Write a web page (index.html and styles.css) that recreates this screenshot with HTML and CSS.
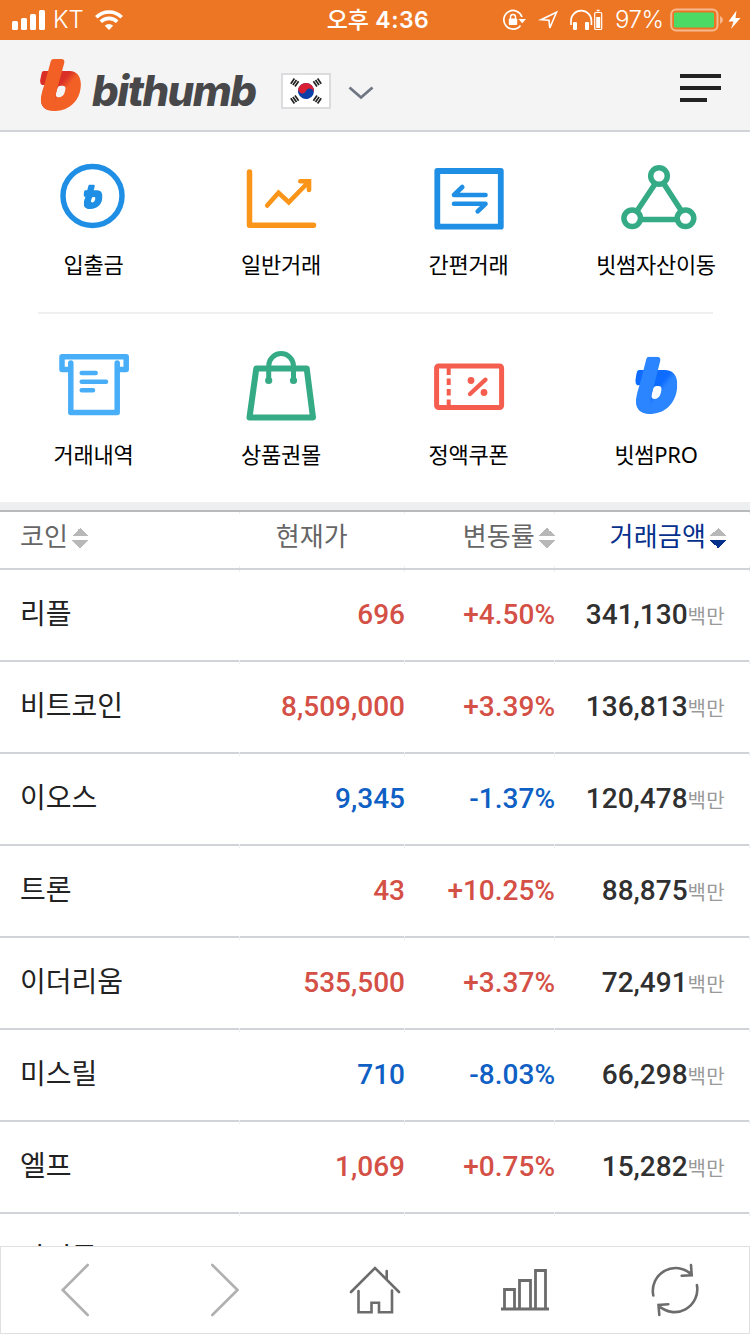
FILE: index.html
```html
<!DOCTYPE html>
<html lang="ko">
<head>
    <meta charset="UTF-8">
    <meta name="viewport" content="width=device-width, initial-scale=1.0">
    <title>bithumb</title>
    <link rel="stylesheet" href="styles.css">
</head>
<body>
    <svg width="0" height="0">
        <defs>
            <linearGradient id="fold-red" x1="0.45" y1="0.2" x2="0.8" y2="0.5">
                <stop offset="0.2" stop-color="#d92f27"/>
                <stop offset="0.65" stop-color="#f26026"/>
            </linearGradient>
            <linearGradient id="fold-blue" x1="0.45" y1="0.2" x2="0.8" y2="0.5">
                <stop offset="0.4" stop-color="#0d6cff"/>
                <stop offset="0.7" stop-color="#2b85ff"/>
            </linearGradient>
            <path id="b-tab" d="M10 36H60L50 78H6Q-1 74 0 64L4 44Q5 37 10 36Z"/>
            <path id="b-bowl" fill-rule="evenodd" d="M50 36H88C111 37 122 52 122 76C122 122 90 156 44 156C14 156 0 142 3 116L20 70ZM62 80Q53 80 51 90L47 104Q46 115 56 115Q67 114 72 104Q76 94 76 88Q76 80 68 80Z"/>
            <path id="b-stem" d="M40 0H64Q75 1 72 13L47 104Q40 130 50 156L30 154Q-2 148 3 112Q5 98 13 76L32 6Q34 0 40 0Z"/>
        </defs>
    </svg>

    <div class="status-bar">
        <div class="status-left">
            <svg width="33" height="20" viewBox="12 10 33 20" fill="#fff">
                <rect x="12" y="21" width="6" height="9" rx="1.5"/>
                <rect x="21" y="18" width="6" height="12" rx="1.5"/>
                <rect x="30" y="14" width="6" height="16" rx="1.5"/>
                <rect x="39" y="10" width="6" height="20" rx="1.5"/>
            </svg>
            <span class="carrier">KT</span>
            <svg width="28" height="20" viewBox="0 0 28 20" fill="none" stroke="#fff" stroke-width="3.6">
                <path d="M1.3 7.2a18 18 0 0 1 25.4 0"/>
                <path d="M5.8 11.8a11.6 11.6 0 0 1 16.4 0"/>
                <path d="M14 20l-4.2-4.2a6 6 0 0 1 8.4 0z" fill="#fff" stroke="none"/>
            </svg>
        </div>
        <div class="clock"><span>오후</span> 4:36</div>
        <div class="status-right">
            <svg width="102" height="22" viewBox="502 9 102 22" fill="none" stroke="#fff" stroke-width="1.7">
                <path d="M522 17a9.3 9.3 0 1 0-1.500 8.500"/>
                <path d="M518.5 19h7.5l-3.8 4.2z" fill="#fff" stroke="none"/>
                <rect x="508.8" y="18.5" width="8.4" height="6.5" rx="1" fill="#fff" stroke="none"/>
                <path d="M510.5 19v-2a2.5 2.5 0 0 1 5 0v2" stroke-width="1.4"/>
                <path d="M556.5 12.2L541 19.7l8 0.6 0.8 7.7z" stroke-width="1.6"/>
                <path d="M571 25v-4.5a10.2 9.8 0 0 1 20.4 0V25"/>
                <rect x="573" y="22" width="4" height="8" rx="1" fill="#fff" stroke="none"/>
                <rect x="585" y="22" width="4" height="8" rx="1" fill="#fff" stroke="none"/>
                <rect x="594.7" y="12.5" width="7" height="17" rx="1" stroke-width="1.2"/>
                <path d="M596.6 10.5h3" stroke-width="1.5"/>
                <rect x="596.2" y="17" width="4" height="11" fill="#fff" stroke="none"/>
            </svg>
            <span class="percent">97%</span>
            <svg width="71" height="24" viewBox="670 8.5 71 24">
                <rect x="671.2" y="10" width="46.3" height="21" rx="5" fill="none" stroke="#f6b98f" stroke-width="2"/>
                <rect x="674" y="13" width="40" height="15" rx="1.5" fill="#4cd964"/>
                <path d="M720 16.5q3 1.5 3 4t-3 4z" fill="#f6b98f"/>
                <path d="M736.5 11l-8 11h5l-2.5 7.5 9.5-11h-5z" fill="#fff"/>
            </svg>
        </div>
    </div>

    <header class="header">
        <a class="logo" href="#">
            <svg width="41" height="52" viewBox="0 0 122 156">
                <use href="#b-tab" fill="#d92f27"/>
                <use href="#b-bowl" fill="url(#fold-red)"/>
                <use href="#b-stem" fill="#f26026"/>
            </svg>
            <span class="logo-text">bithumb</span>
        </a>
        <div class="language">
            <svg class="flag" width="46" height="32" viewBox="-23 -16 46 32">
                <g transform="rotate(25)">
                    <circle r="8" fill="#0b3fa8"/>
                    <path d="M-8 0a8 8 0 0 1 16 0a4 4 0 0 0-8 0a4 4 0 0 1-8 0z" fill="#d81f33"/>
                </g>
                <g stroke="#222" stroke-width="1.7">
                    <path d="M-11 -4.5l3.6-5.2M-13.1 -5.9l3.6-5.2M-15.2 -7.3l3.6-5.2"/>
                    <path d="M11 -4.5l-3.6-5.2M13.1 -5.9l-3.6-5.2M15.2 -7.3l-3.6-5.2"/>
                    <path d="M-11 4.5l3.6 5.2M-13.1 5.9l3.6 5.2M-15.2 7.3l3.6 5.2"/>
                    <path d="M11 4.5l-3.6 5.2M13.1 5.9l-3.6 5.2M15.2 7.3l-3.6 5.2"/>
                </g>
            </svg>
            <svg class="arrow" width="26" height="14" viewBox="0 0 26 14" fill="none" stroke="#6f7683" stroke-width="2.8">
                <path d="M1.5 1.5L13 11.5 24.5 1.5"/>
            </svg>
        </div>
        <div class="hamburger">
            <span></span>
            <span></span>
            <span class="short"></span>
        </div>
    </header>

    <nav class="menu">
        <div class="menu-row">
            <a class="menu-item" href="#">
                <svg viewBox="0 0 80 80">
                    <circle cx="38.5" cy="40" r="29.5" fill="none" stroke="#1f8fe5" stroke-width="5.5"/>
                    <svg x="29.5" y="28.5" width="19" height="24.5" viewBox="0 0 122 156" preserveAspectRatio="none" fill="#1f8fe5">
                        <use href="#b-tab"/>
                        <use href="#b-bowl"/>
                        <use href="#b-stem"/>
                    </svg>
                </svg>
                <span>입출금</span>
            </a>
            <a class="menu-item" href="#">
                <svg viewBox="0 0 80 80" fill="none" stroke="#fb9519" stroke-width="5.5" stroke-linecap="round" stroke-linejoin="round">
                    <path d="M7.5 16V69.2H71.5"/>
                    <path d="M25.2 49.5L36.5 36.7 46.8 46.3 67 25.5M58.3 25.2H67V34" stroke-width="4.6" stroke-linejoin="miter"/>
                </svg>
                <span>일반거래</span>
            </a>
            <a class="menu-item" href="#">
                <svg viewBox="0 0 80 80" fill="none" stroke="#1f8fe5" stroke-width="4.6" stroke-linecap="round" stroke-linejoin="round">
                    <rect x="8.3" y="15" width="63.5" height="55.7" stroke-width="5.8"/>
                    <path d="M56.5 39H25L33.3 31"/>
                    <path d="M25 47.8H56.5L48.7 55.3"/>
                </svg>
                <span>간편거래</span>
            </a>
            <a class="menu-item" href="#">
                <svg viewBox="0 0 80 80" fill="none" stroke="#35ab85" stroke-width="5.5">
                    <path d="M38 28L20 55M47 28L64.5 55M24 63.5H60"/>
                    <circle cx="42" cy="20" r="8.3"/>
                    <circle cx="15.2" cy="62.3" r="8.3"/>
                    <circle cx="68.5" cy="62.3" r="8.3"/>
                </svg>
                <span>빗썸자산이동</span>
            </a>
        </div>
        <div class="menu-row">
            <a class="menu-item" href="#">
                <svg viewBox="0 0 80 80" fill="none" stroke="#49aef8" stroke-width="5.5" stroke-linejoin="round">
                    <path d="M16 23.5H8V10.7H72.2V23.5H65"/>
                    <path d="M16.8 17V66.5H63.2V17" stroke-linecap="round"/>
                    <path d="M27.7 27H41.7M27.7 35.7H52M27.7 44.2H39" stroke-width="4.5" stroke-linecap="round"/>
                </svg>
                <span>거래내역</span>
            </a>
            <a class="menu-item" href="#">
                <svg viewBox="0 0 80 80" fill="none" stroke="#35ab85" stroke-width="6" stroke-linejoin="round">
                    <path d="M14.3 22.5H64.7L71 71.5H7.5Z"/>
                    <path d="M26.7 34V20a12.4 12.4 0 0 1 24.8 0V34" stroke-width="5"/>
                    <circle cx="26.7" cy="34.5" r="3.6" fill="#35ab85" stroke="none"/>
                    <circle cx="51.5" cy="34.5" r="3.6" fill="#35ab85" stroke="none"/>
                </svg>
                <span>상품권몰</span>
            </a>
            <a class="menu-item" href="#">
                <svg viewBox="0 0 80 80" fill="none" stroke="#f55d4f" stroke-width="5">
                    <rect x="7.6" y="20" width="65" height="41.5" rx="2"/>
                    <path d="M19.7 22v7M19.7 32.5v6.5M19.7 43v6.5M19.7 53.5v7" stroke-width="4"/>
                    <path d="M41 48L56.5 33.7" stroke-width="4.3" stroke-linecap="round"/>
                    <circle cx="42" cy="34.5" r="3.4" fill="#f55d4f" stroke="none"/>
                    <circle cx="55" cy="46.5" r="3.4" fill="#f55d4f" stroke="none"/>
                </svg>
                <span>정액쿠폰</span>
            </a>
            <a class="menu-item" href="#">
                <svg viewBox="0 0 80 80">
                    <svg x="18.3" y="10.7" width="42" height="57.3" viewBox="0 0 122 156" preserveAspectRatio="none">
                        <use href="#b-tab" fill="#0d6cff"/>
                        <use href="#b-bowl" fill="url(#fold-blue)"/>
                        <use href="#b-stem" fill="#2b85ff"/>
                    </svg>
                </svg>
                <span>빗썸PRO</span>
            </a>
        </div>
    </nav>

    <main class="coins">
        <div class="coin-row coin-head">
            <div>코인<i class="sort"></i></div>
            <div>현재가</div>
            <div>변동률<i class="sort"></i></div>
            <div class="sorted">거래금액<i class="sort"></i></div>
        </div>
        <div class="coin-row up">
            <div class="name">리플</div>
            <div class="price">696</div>
            <div class="rate">+4.50%</div>
            <div class="volume">341,130<small>백만</small></div>
        </div>
        <div class="coin-row up">
            <div class="name">비트코인</div>
            <div class="price">8,509,000</div>
            <div class="rate">+3.39%</div>
            <div class="volume">136,813<small>백만</small></div>
        </div>
        <div class="coin-row down">
            <div class="name">이오스</div>
            <div class="price">9,345</div>
            <div class="rate">-1.37%</div>
            <div class="volume">120,478<small>백만</small></div>
        </div>
        <div class="coin-row up">
            <div class="name">트론</div>
            <div class="price">43</div>
            <div class="rate">+10.25%</div>
            <div class="volume">88,875<small>백만</small></div>
        </div>
        <div class="coin-row up">
            <div class="name">이더리움</div>
            <div class="price">535,500</div>
            <div class="rate">+3.37%</div>
            <div class="volume">72,491<small>백만</small></div>
        </div>
        <div class="coin-row down">
            <div class="name">미스릴</div>
            <div class="price">710</div>
            <div class="rate">-8.03%</div>
            <div class="volume">66,298<small>백만</small></div>
        </div>
        <div class="coin-row up">
            <div class="name">엘프</div>
            <div class="price">1,069</div>
            <div class="rate">+0.75%</div>
            <div class="volume">15,282<small>백만</small></div>
        </div>
        <div class="coin-row">
            <div class="name">아이콘</div>
            <div></div>
            <div></div>
            <div></div>
        </div>
    </main>

    <footer class="toolbar">
        <a class="off" href="#"><svg viewBox="45 1260 60 60"><path d="M87.7 1265L62.7 1290 87.7 1315"/></svg></a>
        <a class="off" href="#"><svg viewBox="195 1260 60 60"><path d="M212.3 1265L237.5 1290 212.3 1315"/></svg></a>
        <a href="#"><svg viewBox="345 1260 60 60"><path d="M351 1292L375 1268 399 1292M386.7 1271V1279M358.5 1291V1312.3H371.5V1302.7H379V1312.3H392V1290.5"/></svg></a>
        <a href="#"><svg class="chart" viewBox="495 1260 60 60"><path d="M501 1309H549M504.5 1309V1289.5H514.5V1309M519.5 1309V1280.5H530.5V1309M535.5 1309V1270.5H545.5V1309"/></svg></a>
        <a href="#"><svg viewBox="645 1260 60 60"><path d="M653.3 1295.5A22.8 22.8 0 0 1 691.5 1274.5M691 1265L691.7 1275.2 681.7 1275.7M696.9 1285A22.8 22.8 0 0 1 658.8 1305.8M668.3 1304.3L658.5 1305 659.3 1315"/></svg></a>
    </footer>
</body>
</html>
```
FILE: styles.css
```css
body {
    margin: 0;
    padding: 0;
    height: 1334px;
    display: flex;
    flex-direction: column;
    overflow: hidden;
    background: #fff;
    font-family: Roboto, 'Noto Sans CJK KR', sans-serif;
}

a {
    color: inherit;
    text-decoration: none;
}

svg {
    display: block;
    flex-shrink: 0;
}

/* status bar */
.status-bar {
    height: 40px;
    flex-shrink: 0;
    display: grid;
    grid-template-columns: 1fr auto 1fr;
    align-items: center;
    padding: 0 9px 0 12px;
    background: #ed7625;
    color: #fff;
    font-family: Inter, 'Noto Sans CJK KR', sans-serif;
    font-size: 24px;
    line-height: 40px;
}

.status-left,
.status-right {
    display: flex;
    align-items: center;
}

.carrier {
    width: 29px;
    margin: 0 13px 0 8px;
    font-weight: 300;
}

.clock {
    padding-left: 3px;
    font-size: 23px;
    font-weight: 600;
    letter-spacing: 0.5px;
}

.clock span {
    font-weight: 500;
    letter-spacing: 0;
}

.status-right {
    justify-content: flex-end;
}

.percent {
    width: 49px;
    margin: 0 6px 0 11px;
    font-weight: 300;
    letter-spacing: -0.5px;
}

/* header */
.header {
    height: 90px;
    flex-shrink: 0;
    display: flex;
    align-items: center;
    padding: 0 29px 0 40px;
    background: #f4f4f4;
    border-bottom: 2px solid #d0d4d9;
}

.logo {
    display: flex;
    align-items: center;
}

.logo-text {
    width: 166px;
    margin-left: 11px;
    padding-top: 11px;
    color: #48484a;
    font-family: Inter, sans-serif;
    font-size: 42px;
    font-style: italic;
    font-weight: 800;
    line-height: 50px;
    letter-spacing: -1.5px;
}

.language {
    display: flex;
    align-items: center;
    gap: 17px;
    margin-left: 23px;
    padding-top: 12px;
}

.flag {
    background: #fff;
    border: 2px solid #dcdcde;
}

.arrow {
    padding-top: 4px;
}

.hamburger {
    display: flex;
    flex-direction: column;
    gap: 8px;
    width: 41px;
    margin-left: auto;
    padding-top: 5px;
}

.hamburger span {
    height: 4px;
    background: #222;
}

.hamburger .short {
    width: 27px;
}

/* menu */
.menu {
    height: 370px;
    flex-shrink: 0;
    border-bottom: 8px solid #eeeff1;
}

.menu-row {
    display: grid;
    grid-template-columns: 188px 187px 188px 187px;
    height: 156px;
    padding-top: 24px;
}

.menu-row:first-child {
    background: linear-gradient(#efefef, #efefef) center bottom / 675px 2px no-repeat;
    padding-bottom: 2px;
}

.menu-row + .menu-row {
    padding-top: 32px;
}

.menu-item {
    display: flex;
    flex-direction: column;
    align-items: center;
    color: #000;
    font-family: 'Noto Sans', 'Noto Sans CJK KR', sans-serif;
    font-size: 22px;
    line-height: 34px;
    letter-spacing: -0.3px;
    white-space: nowrap;
}

.menu-item > span {
    padding-right: 1px;
}

.menu-item > svg {
    width: 80px;
    height: 80px;
    margin-bottom: 11px;
}

/* coin list */
.coins {
    flex: 1;
    min-height: 0;
    overflow: hidden;
    border-top: 2px solid #b8bbbc;
}

.coin-row {
    display: grid;
    grid-template-columns: 240px 165px 150px 195px;
    height: 90px;
    border-bottom: 2px solid #d0d4d9;
    font-size: 28px;
    font-weight: 500;
    line-height: 90px;
    text-align: right;
}

.coin-row > div {
    background:
        linear-gradient(#edf0f2, #edf0f2) right top / 1px 2px no-repeat,
        linear-gradient(#edf0f2, #edf0f2) right bottom / 1px 2px no-repeat;
}

.coin-row .name {
    padding-left: 20px;
    color: #222;
    font-family: 'Noto Sans CJK KR', sans-serif;
    font-weight: 400;
    line-height: 84px;
    text-align: left;
}

.coin-head {
    height: 56px;
    color: #666;
    font-family: 'Noto Sans CJK KR', sans-serif;
    font-size: 26px;
    font-weight: 400;
    line-height: 46px;
    letter-spacing: 0.2px;
}

.coin-head > div:first-child {
    padding-left: 20px;
    text-align: left;
}

.coin-head > div:nth-child(2) {
    padding-right: 57px;
}

.coin-head .sorted {
    padding-right: 24px;
    color: #05308c;
    --down: #05308c;
}

.sort {
    display: inline-block;
    width: 16px;
    height: 20px;
    margin-left: 4px;
    vertical-align: -2px;
    background:
        conic-gradient(from 135deg at 50% 0, #b8b8b8 90deg, transparent 0) top / 16px 8px no-repeat,
        conic-gradient(from -45deg at 50% 100%, var(--down, #b8b8b8) 90deg, transparent 0) bottom / 16px 8px no-repeat;
}

.up .price,
.up .rate {
    color: #d45046;
}

.down .price,
.down .rate {
    color: #0f5fc4;
}

.volume {
    padding-right: 25px;
    color: #303030;
}

.volume small {
    color: #999;
    font-size: 20px;
    font-weight: 400;
    letter-spacing: 0.3px;
}

/* bottom toolbar */
.toolbar {
    height: 88px;
    flex-shrink: 0;
    display: grid;
    grid-template-columns: repeat(5, 1fr);
    place-items: center;
    box-shadow: inset 0 0 0 1px #e0e0e0;
    background: #fff;
}

.toolbar svg {
    width: 60px;
    height: 60px;
    fill: none;
    stroke: #6c6c6c;
    stroke-width: 2.6;
    stroke-linecap: round;
}

.toolbar .off svg {
    stroke: #b0b0b0;
}

.toolbar .chart {
    stroke-width: 2.8;
    stroke-linecap: butt;
}
```
